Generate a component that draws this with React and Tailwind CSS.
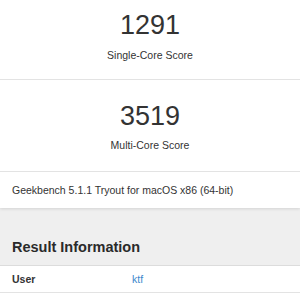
export default function App() {
  const font = { fontFamily: '"Liberation Sans", Arial, sans-serif' };
  return (
    <div className="w-[300px] h-[300px] overflow-hidden bg-[#efefef] text-[#333] flex flex-col" style={font}>
      <div className="bg-white shadow-[0_1px_3px_rgba(0,0,0,0.12)] relative">
        <div className="h-[80px] pt-[12px] border-b border-[#e3e3e3] flex flex-col items-center">
          <div className="text-[27px] leading-[27px] text-[#333]">1291</div>
          <div className="mt-[10px] text-[10.5px] leading-[13px] text-[#333]">Single-Core Score</div>
        </div>
        <div className="h-[92px] pt-[23px] border-b border-[#e3e3e3] flex flex-col items-center">
          <div className="text-[27px] leading-[27px] text-[#333]">3519</div>
          <div className="mt-[9px] text-[10.5px] leading-[13px] text-[#333]">Multi-Core Score</div>
        </div>
        <div className="h-[36px] pt-[12px] px-[12px] text-[10.5px] leading-[13px] text-[#333]">
          Geekbench 5.1.1 Tryout for macOS x86 (64-bit)
        </div>
      </div>
      <div className="pt-[30px] pb-[9px] px-[12px]">
        <div className="text-[14.5px] leading-[18px] font-bold text-[#2a2a2a]">Result Information</div>
      </div>
      <div className="bg-white border-t border-[#dcdcdc] flex-1">
        <div className="h-[27px] pt-[7px] flex border-b border-[#e3e3e3] text-[10.5px] leading-[13px]">
          <div className="w-[132px] pl-[12px] font-semibold text-[#333]">User</div>
          <div className="text-[#3b88cc]">ktf</div>
        </div>
      </div>
    </div>
  );
}
